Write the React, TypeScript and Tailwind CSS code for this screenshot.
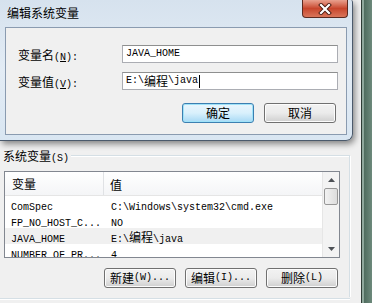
const cjk = { fontFamily: '"Noto Sans CJK SC", "Noto Sans", sans-serif' };

function M({ children }: { children: React.ReactNode }) {
  // SimSun-like half width latin text
  return <span className="font-['Liberation_Mono',monospace] text-[10px]">{children}</span>;
}

function C({ children }: { children: React.ReactNode }) {
  return <span className="font-['Noto_Sans_CJK_SC',sans-serif] text-[12px]">{children}</span>;
}

function WinButton({ children, focus = false, className = "" }: { children: React.ReactNode; focus?: boolean; className?: string }) {
  return (
    <div
      className={
        "h-[20px] rounded-[3px] border flex items-center justify-center text-[12px] text-black leading-none " +
        (focus
          ? "border-[#3c7fb1] bg-gradient-to-b from-[#eaf6fd] via-[#d9f0fc] to-[#a7d9f5] shadow-[inset_0_0_0_1px_#9fe2f8] "
          : "border-[#707070] bg-gradient-to-b from-[#f2f2f2] via-[#ebebeb] to-[#cfcfcf] shadow-[inset_0_0_0_1px_#fcfcfc] ") +
        className
      }
    >
      {children}
    </div>
  );
}

function Dialog() {
  return (
    <div className="relative z-10 w-[353px] h-[141px] rounded-br-[7px] rounded-tr-[2px] border border-[#4b5a6c] border-t-0 border-l-0 bg-gradient-to-b from-[#d6e2ee] via-[#e3ecf5] to-[#d9e6f2] shadow-[2px_3px_6px_rgba(0,0,0,0.45)]">
      {/* title bar */}
      <div className="h-[27px] flex items-start justify-between">
        <div className="pl-[7px] pt-[4px] text-[12px] text-black leading-[18px]" style={cjk}>
          编辑系统变量
        </div>
        <div className="mr-[4px] w-[46px] h-[18px] rounded-b-[4px] border border-t-0 border-[#5c2a20] bg-gradient-to-b from-[#e8a08e] via-[#c7452c] to-[#d9755a] flex items-center justify-center">
          <svg width="14" height="12" viewBox="0 0 14 12">
            <path d="M3 2 L11 10 M11 2 L3 10" stroke="#4a1a10" strokeWidth="4" strokeLinecap="square" />
            <path d="M3 2 L11 10 M11 2 L3 10" stroke="#ffffff" strokeWidth="2.2" strokeLinecap="square" />
          </svg>
        </div>
      </div>
      {/* client area */}
      <div className="ml-[5px] w-[342px] h-[108px] border border-[#8a9bb0] bg-[#f0f0f0] flex flex-col">
        <div className="mt-[17px] flex items-center h-[18px]">
          <div className="w-[116px] pl-[12px] text-black leading-none">
            <C>变量名</C>
            <M>(<u>N</u>):</M>
          </div>
          <div className="w-[216px] h-[18px] border border-[#abadb3] border-t-[#8e8f8f] bg-white flex items-center pl-[3px] leading-none text-black">
            <M>JAVA_HOME</M>
          </div>
        </div>
        <div className="mt-[9px] flex items-center h-[18px]">
          <div className="w-[116px] pl-[12px] text-black leading-none">
            <C>变量值</C>
            <M>(<u>V</u>):</M>
          </div>
          <div className="w-[216px] h-[18px] border border-[#abadb3] border-t-[#8e8f8f] bg-white flex items-center pl-[3px] leading-none text-black">
            <M>E:\</M>
            <C>编程</C>
            <M>\java</M>
            <span className="ml-[1px] w-[1px] h-[13px] bg-black" />
          </div>
        </div>
        <div className="mt-[13px] flex gap-[10px] pl-[176px]">
          <WinButton focus className="w-[72px]">
            <C>确定</C>
          </WinButton>
          <WinButton className="w-[72px]">
            <C>取消</C>
          </WinButton>
        </div>
      </div>
    </div>
  );
}

const rows = [
  { name: <M>ComSpec</M>, value: <M>C:\Windows\system32\cmd.exe</M> },
  { name: <M>FP_NO_HOST_C...</M>, value: <M>NO</M> },
  {
    name: <M>JAVA_HOME</M>,
    value: (
      <>
        <M>E:\</M>
        <C>编程</C>
        <M>\java</M>
      </>
    ),
    selected: true,
  },
  { name: <M>NUMBER_OF_PR...</M>, value: <M>4</M> },
];

function ScrollArrow({ up }: { up: boolean }) {
  return (
    <div className="h-[16px] flex items-center justify-center">
      <svg width="7" height="4" viewBox="0 0 7 4">
        <path d={up ? "M0 4 L3.5 0 L7 4 Z" : "M0 0 L3.5 4 L7 0 Z"} fill="#4d5156" />
      </svg>
    </div>
  );
}

function VarList() {
  return (
    <div className="ml-[4px] w-[336px] h-[87px] border border-[#828790] bg-white flex overflow-hidden">
      <div className="flex-1 flex flex-col overflow-hidden">
        <div className="h-[24px] shrink-0 flex items-center bg-gradient-to-b from-white to-[#f4f5f7] border-b border-[#e5e5e5] leading-none">
          <div className="w-[99px] h-full flex items-center pl-[7px] border-r border-[#e0e2e5]">
            <C>变量</C>
          </div>
          <div className="pl-[6px]">
            <C>值</C>
          </div>
        </div>
        {rows.map((r, i) => (
          <div
            key={i}
            className={"h-[16px] shrink-0 flex items-center leading-none text-black " + (r.selected ? "bg-[#f0f0f0]" : "")}
          >
            <div className="w-[99px] pl-[6px] whitespace-nowrap overflow-hidden">{r.name}</div>
            <div className="pl-[7px] whitespace-nowrap">{r.value}</div>
          </div>
        ))}
      </div>
      <div className="w-[17px] shrink-0 bg-[#f3f3f3] border-l border-[#e6e6e6] flex flex-col">
        <ScrollArrow up />
        <div className="mx-[1px] h-[17px] rounded-[2px] border border-[#979797] bg-gradient-to-r from-[#f2f2f2] to-[#dcdcdc]" />
        <div className="flex-1" />
        <ScrollArrow up={false} />
      </div>
    </div>
  );
}

export default function App() {
  return (
    <div className="w-[372px] h-[303px] overflow-hidden flex bg-[#f0f0f0]">
      <div className="w-[361px] flex flex-col">
        <Dialog />
        <div className="relative flex flex-col">
          <div className="flex items-center h-[16px] mt-[6px]">
            <div className="pl-[3px] pr-[2px] leading-none text-black">
              <C>系统变量</C>
              <M>(S)</M>
            </div>
            <div className="flex-1 mr-[11px] h-[2px] border-t border-[#d5dfe5] border-b border-b-white mt-[2px]" />
          </div>
          <div className="flex">
            <div className="flex flex-col">
              <div className="mt-[8px]">
                <VarList />
              </div>
              <div className="mt-[10px] flex gap-[9px] pl-[104px]">
                <WinButton className="w-[72px]">
                  <C>新建</C>
                  <M>(W)...</M>
                </WinButton>
                <WinButton className="w-[72px]">
                  <C>编辑</C>
                  <M>(I)...</M>
                </WinButton>
                <WinButton className="w-[72px]">
                  <C>删除</C>
                  <M>(L)</M>
                </WinButton>
              </div>
            </div>
            <div className="ml-[9px] w-[2px] h-[141px] -mt-[7px] border-l border-[#d5dfe5] border-r border-r-white" />
          </div>
          <div className="mt-[1px] mr-[11px] h-[2px] border-t border-[#d5dfe5] border-b border-b-white" />
        </div>
      </div>
      <div className="w-[11px] flex">
        <div className="w-[1px] bg-[#2f3d36]" />
        <div className="w-[2px] bg-[#8fa89c]" />
        <div className="flex-1 bg-gradient-to-r from-[#4f6c5e] to-[#6d8a7c]" />
      </div>
    </div>
  );
}
